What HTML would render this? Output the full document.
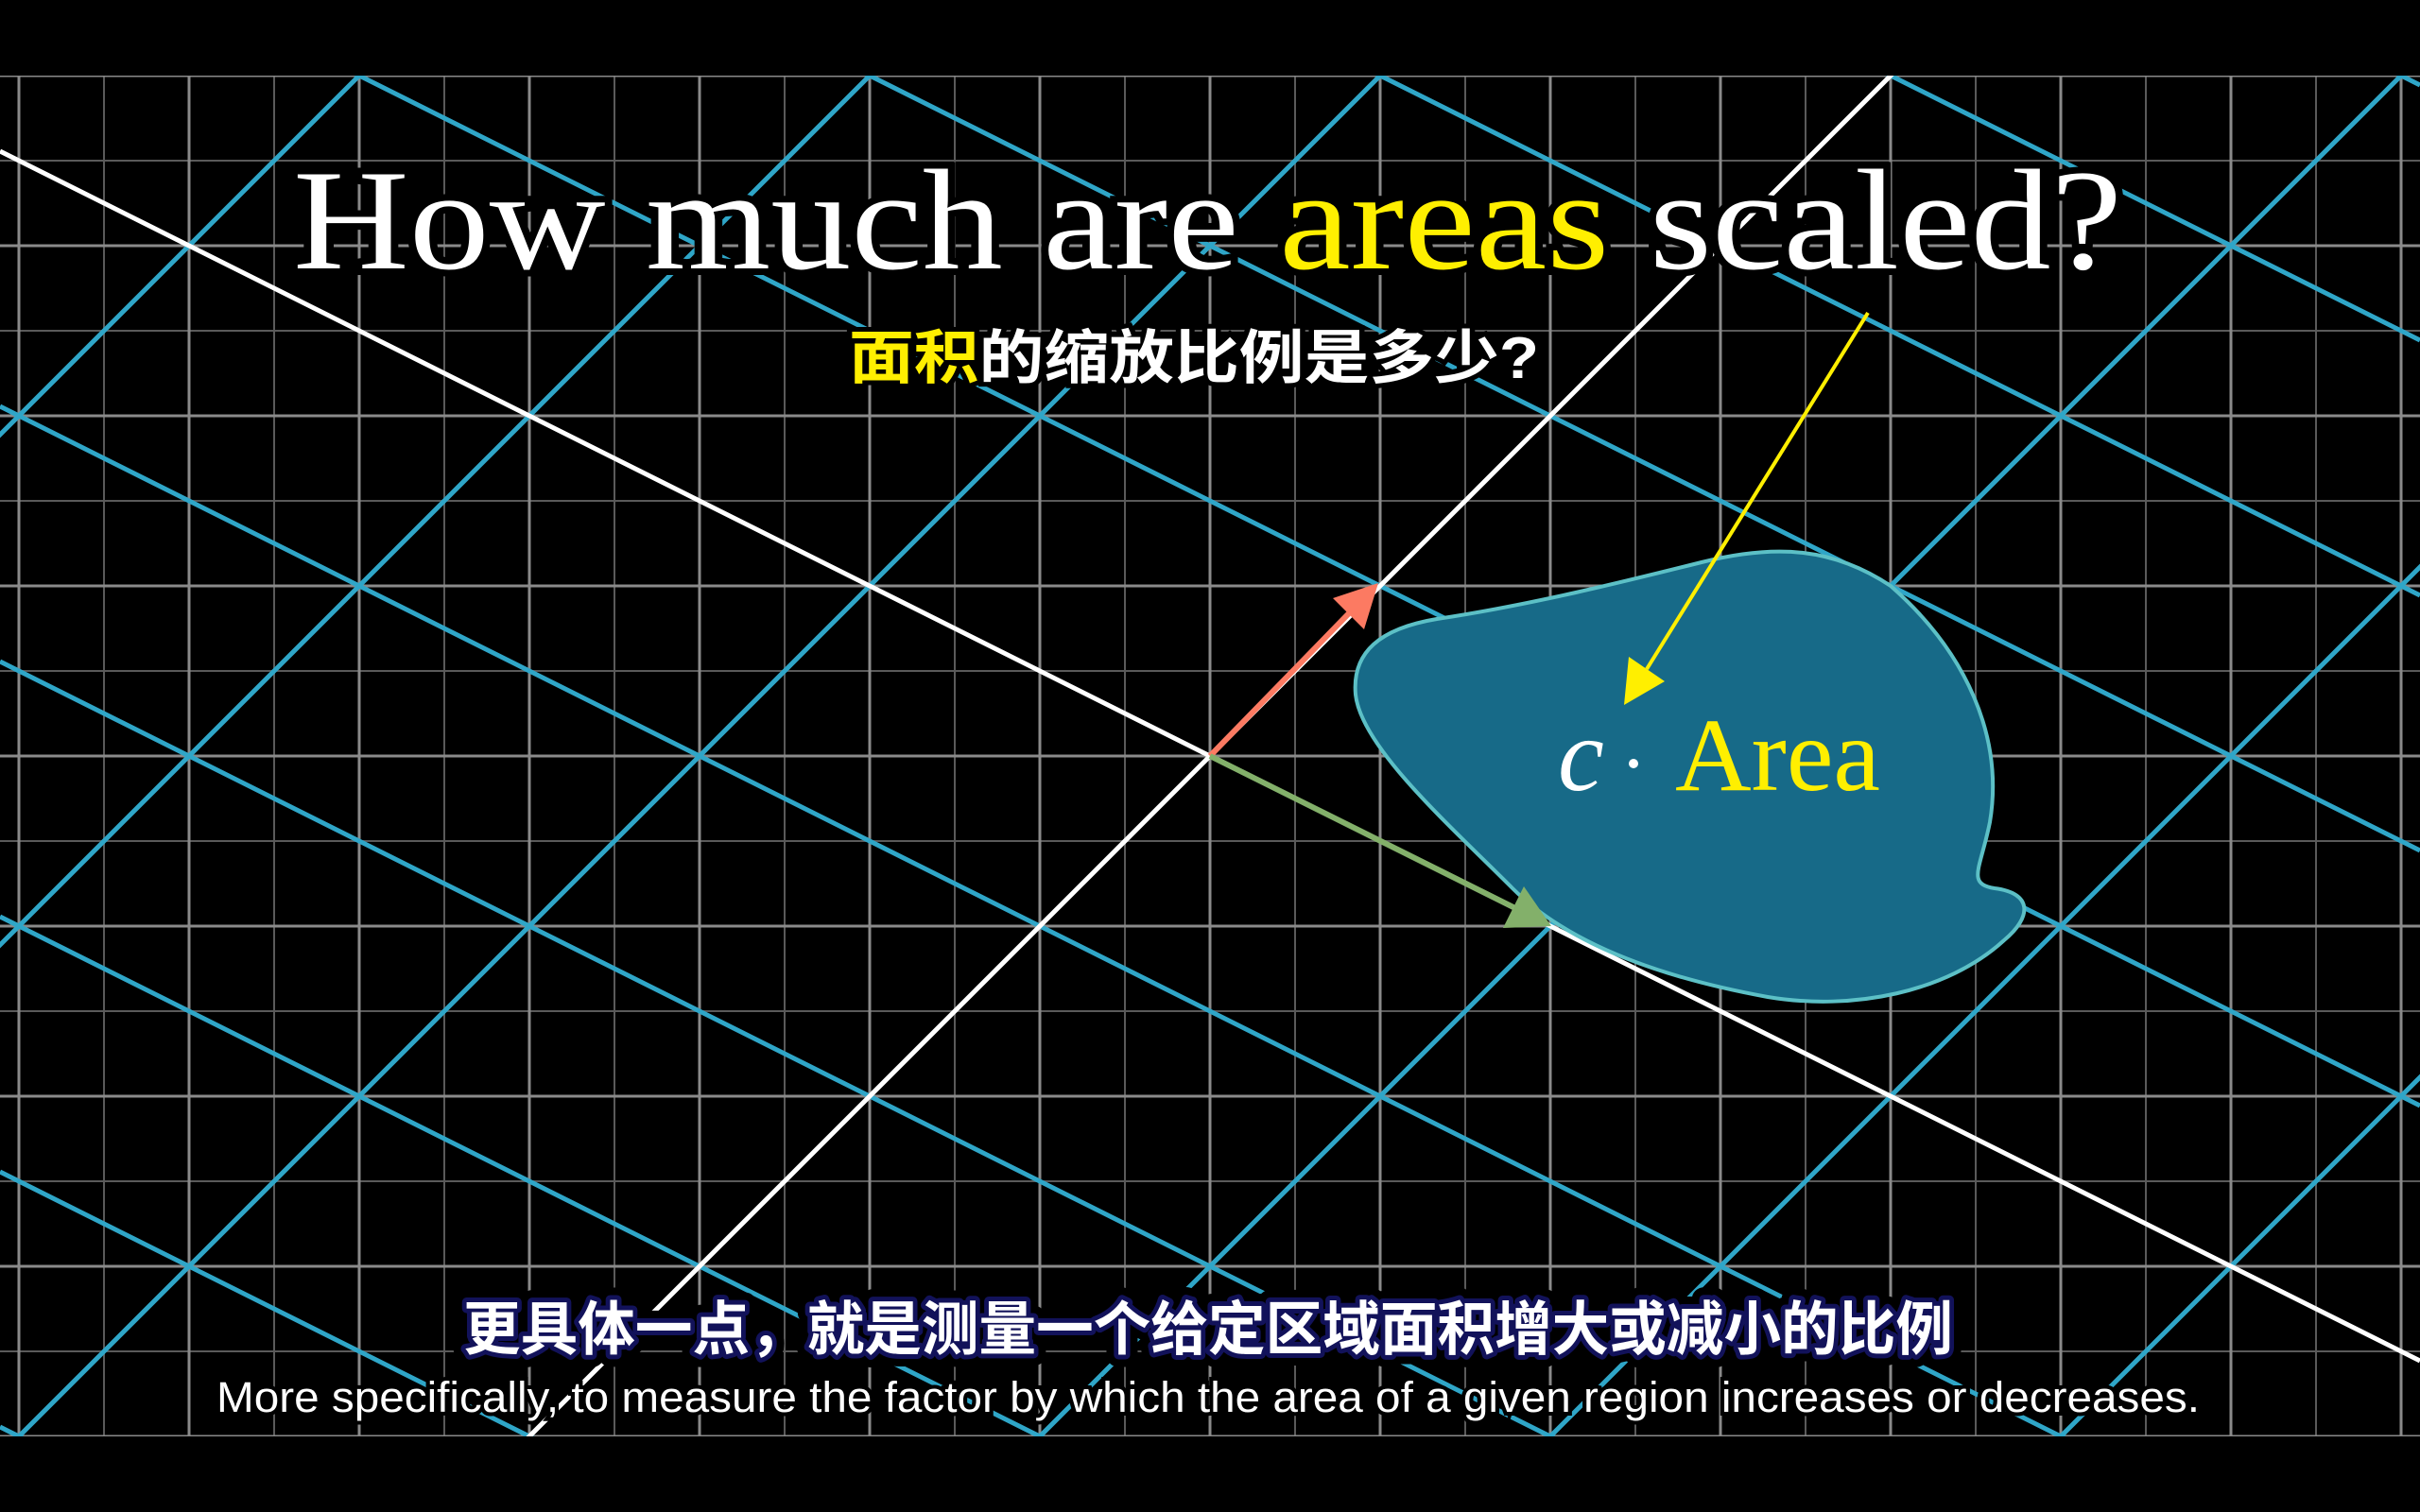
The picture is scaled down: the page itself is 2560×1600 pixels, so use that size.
<!DOCTYPE html>
<html><head><meta charset="utf-8"><style>
html,body{margin:0;padding:0;background:#000;width:2560px;height:1600px;overflow:hidden}
svg{display:block;position:absolute;left:0;top:0}
</style></head><body>
<svg width="2560" height="1600" viewBox="0 0 2560 1600" xmlns="http://www.w3.org/2000/svg">
<defs><clipPath id="v"><rect x="0" y="80" width="2560" height="1440"/></clipPath></defs>
<rect width="2560" height="1600" fill="#000"/>
<g clip-path="url(#v)">
<path stroke="#5a5a5a" stroke-width="2" fill="none" d="M110 80V1520M290 80V1520M470 80V1520M650 80V1520M830 80V1520M1010 80V1520M1190 80V1520M1370 80V1520M1550 80V1520M1730 80V1520M1910 80V1520M2090 80V1520M2270 80V1520M2450 80V1520M0 170H2560M0 350H2560M0 530H2560M0 710H2560M0 890H2560M0 1070H2560M0 1250H2560M0 1430H2560"/>
<path stroke="#8a8a8a" stroke-width="3" fill="none" d="M20 80V1520M200 80V1520M380 80V1520M560 80V1520M740 80V1520M920 80V1520M1100 80V1520M1280 80V1520M1460 80V1520M1640 80V1520M1820 80V1520M2000 80V1520M2180 80V1520M2360 80V1520M2540 80V1520M0 80H2560M0 260H2560M0 440H2560M0 620H2560M0 800H2560M0 980H2560M0 1160H2560M0 1340H2560M0 1520H2560"/>
<path stroke="#2fa6c8" stroke-width="5" fill="none" d="M460 0L-1140 1600M1000 0L-600 1600M1540 0L-60 1600M2620 0L1020 1600M3160 0L1560 1600M3700 0L2100 1600M0 -1190L2560 90M0 -920L2560 360M0 -650L2560 630M0 -380L2560 900M0 -110L2560 1170M0 430L2560 1710M0 700L2560 1980M0 970L2560 2250M0 1240L2560 2520M0 1510L2560 2790"/>
<path stroke="#ffffff" stroke-width="5" fill="none" d="M2080 0L480 1600M0 160L2560 1440"/>
<path d="M1434 735 C1430 690 1460 665 1520 655 C1620 640 1720 615 1800 595 C1880 575 1940 580 2000 620 C2080 690 2120 780 2105 870 C2095 920 2080 935 2110 940 C2150 945 2150 970 2120 995 C2060 1050 1960 1070 1870 1055 C1760 1035 1660 1000 1600 940 C1530 870 1440 790 1434 735 Z" fill="#176a88" stroke="#5cc0c6" stroke-width="4"/>
<line x1="1280" y1="800" x2="1427" y2="649" stroke="#fc7a62" stroke-width="6"/>
<polygon points="1458,617 1443,666 1410,633" fill="#fc7a62"/>
<line x1="1280" y1="800" x2="1601" y2="960" stroke="#83b06a" stroke-width="6"/>
<polygon points="1641,980 1590,982 1612,938" fill="#83b06a"/>
<line x1="1976" y1="331" x2="1742" y2="708" stroke="#ffef00" stroke-width="4"/>
<polygon points="1718,746 1761,721 1723,695" fill="#ffef00"/>
<text x="1648" y="836" font-family="Liberation Serif, serif" font-style="italic" font-size="110" fill="#fff">c</text>
<circle cx="1728" cy="808" r="5" fill="#fff"/>
<text x="1772" y="836" font-family="Liberation Serif, serif" font-size="110" fill="#ffef00" textLength="217" lengthAdjust="spacingAndGlyphs">Area</text>
<text x="310" y="284" font-family="Liberation Serif, serif" font-size="152" fill="#fff" stroke="#000" stroke-width="14" paint-order="stroke" textLength="1935" lengthAdjust="spacingAndGlyphs">How much are <tspan fill="#ffef00">areas</tspan> scaled?</text>
<text x="898" y="400" font-family="Liberation Sans, Noto Sans CJK SC, sans-serif" font-size="62" font-weight="bold" fill="#fff" stroke="#000" stroke-width="10" paint-order="stroke" textLength="730" lengthAdjust="spacingAndGlyphs"><tspan fill="#ffef00">面积</tspan>的缩放比例是多少?</text>
</g>
<text x="490" y="1428" font-family="Noto Sans CJK SC, sans-serif" font-size="62" font-weight="bold" fill="#fff" stroke="#000" stroke-width="26" stroke-linejoin="round" paint-order="stroke" textLength="1576" lengthAdjust="spacingAndGlyphs">更具体一点，就是测量一个给定区域面积增大或减小的比例</text>
<text x="490" y="1428" font-family="Noto Sans CJK SC, sans-serif" font-size="62" font-weight="bold" fill="#fff" stroke="#12125a" stroke-width="10" stroke-linejoin="round" paint-order="stroke" textLength="1576" lengthAdjust="spacingAndGlyphs">更具体一点，就是测量一个给定区域面积增大或减小的比例</text>
<text x="229" y="1494" font-family="Liberation Sans, sans-serif" font-size="45" fill="#fff" stroke="#000" stroke-width="8" paint-order="stroke" textLength="2098" lengthAdjust="spacingAndGlyphs">More specifically, to measure the factor by which the area of a given region increases or decreases.</text>
</svg>
</body></html>
